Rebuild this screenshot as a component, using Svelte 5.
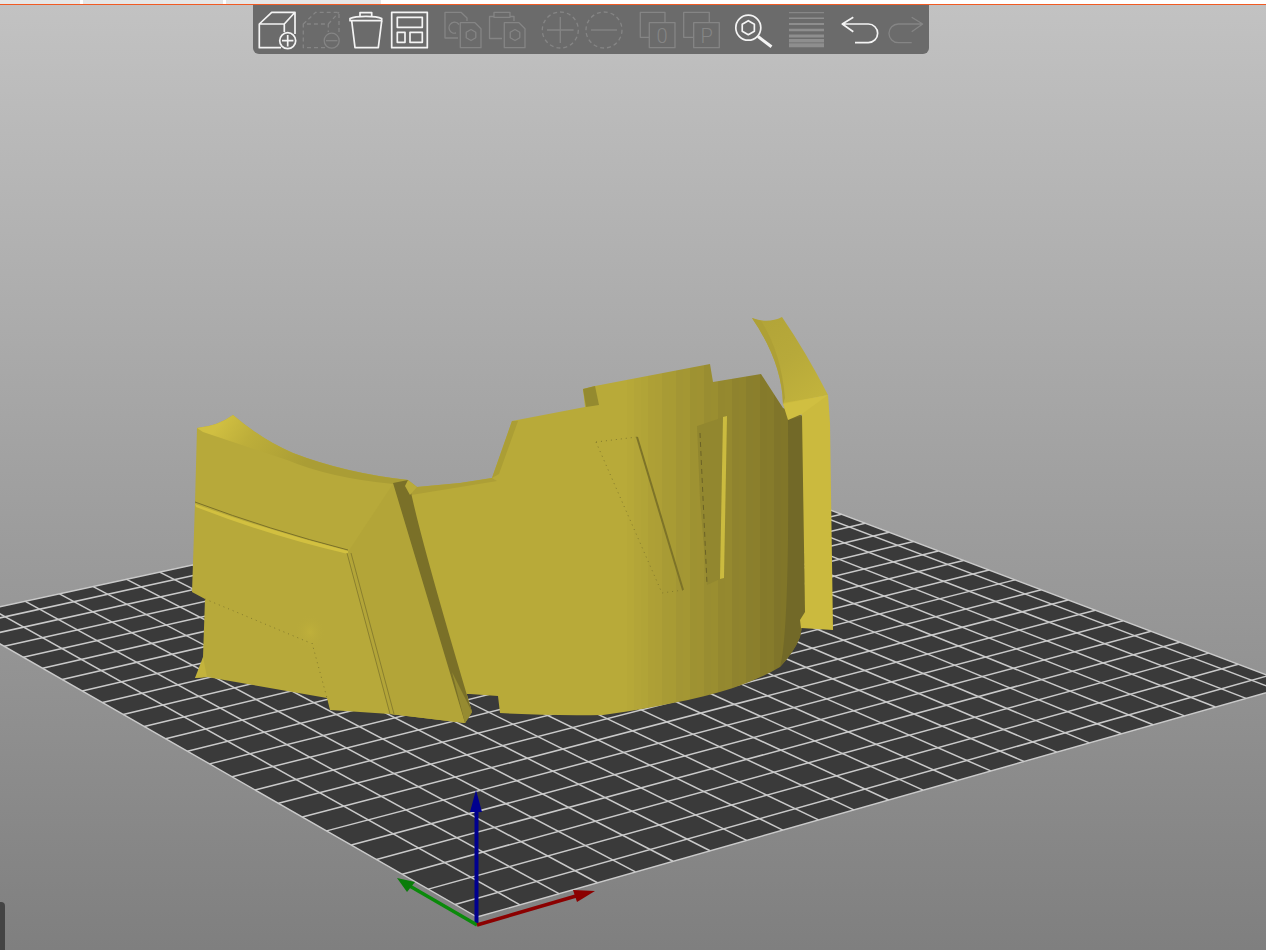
<script>
  // bed outline as seen on screen: front, right, back, left
  const bed = [[477, 917], [1293, 685], [690, 457], [-47, 617]];

  function makeProjection([[x0, y0], [x1, y1], [x2, y2], [x3, y3]]) {
    const sx = x0 - x1 + x2 - x3;
    const sy = y0 - y1 + y2 - y3;
    const dx1 = x1 - x2, dx2 = x3 - x2, dy1 = y1 - y2, dy2 = y3 - y2;
    const den = dx1 * dy2 - dx2 * dy1;
    const g = (sx * dy2 - dx2 * sy) / den;
    const h = (dx1 * sy - sx * dy1) / den;
    const a = x1 - x0 + g * x1, b = x3 - x0 + h * x3;
    const d = y1 - y0 + g * y1, e = y3 - y0 + h * y3;
    return (u, v) => {
      const w = g * u + h * v + 1;
      return [(a * u + b * v + x0) / w, (d * u + e * v + y0) / w];
    };
  }

  const project = makeProjection(bed);
  const gridLines = [];
  for (let u = 0.046; u < 1; u += 0.0423) gridLines.push([project(u, 0), project(u, 1)]);
  for (let v = 0.0343; v < 1; v += 0.0424) gridLines.push([project(0, v), project(1, v)]);

  // faceted shading of the round wall, dark towards the right
  const wallStart = 415;
  const wallEnd = 805;
  const wallStops = [{ x: wallStart, color: 'rgb(184,170,57)' }];
  for (let x = 620, i = 0; x < wallEnd; x += 7, i++) {
    const t = (x - 620) / (wallEnd - 620);
    const bump = (i % 2 ? 2 : -1) * Math.min(1, t * 3);
    const color = `rgb(${184 - 66 * t + bump},${170 - 62 * t + bump},${57 - 18 * t})`;
    wallStops.push({ x, color }, { x: x + 6.8, color });
  }

  const layerLines = [[4.7, 1], [10.3, 1.5], [16, 2], [22, 2.5], [28, 3], [32.7, 3.5], [37.3, 4]];
  const hex = (cx, cy, r) =>
    [0, 1, 2, 3, 4, 5]
      .map((i) => {
        const an = Math.PI / 6 + (i * Math.PI) / 3;
        return `${cx + r * Math.cos(an)},${cy + r * Math.sin(an)}`;
      })
      .join(' ');
</script>

<div class="app">
  <div class="tabs">
    <div class="tab first"></div>
    <div class="tab second"></div>
    <div class="tab third"></div>
  </div>
  <div class="accent"></div>

  <div class="viewport">
    <svg class="scene" viewBox="0 5 1266 945" aria-hidden="true">
      <defs>
        <linearGradient id="wall" gradientUnits="userSpaceOnUse" x1={wallStart} y1="0" x2={wallEnd} y2="0">
          {#each wallStops as stop}
            <stop offset={Math.min(1, (stop.x - wallStart) / (wallEnd - wallStart))} stop-color={stop.color} />
          {/each}
        </linearGradient>
        <linearGradient id="rim" gradientUnits="userSpaceOnUse" x1="225" y1="415" x2="300" y2="470">
          <stop offset="0" stop-color="#d0bf41" />
          <stop offset="0.35" stop-color="#bdae3a" />
          <stop offset="1" stop-color="#aa9d35" />
        </linearGradient>
        <linearGradient id="arm" gradientUnits="userSpaceOnUse" x1="755" y1="320" x2="815" y2="400">
          <stop offset="0" stop-color="#b2a438" />
          <stop offset="0.5" stop-color="#b7a93a" />
          <stop offset="1" stop-color="#c2b33c" />
        </linearGradient>
        <radialGradient id="dent" cx="0.5" cy="0.5" r="0.5">
          <stop offset="0" stop-color="#bfb03b" />
          <stop offset="1" stop-color="#b7a93a" stop-opacity="0" />
        </radialGradient>
      </defs>

      <!-- print bed -->
      <polygon class="plate" points={bed.join(' ')} />
      {#each gridLines as [from, to]}
        <line class="gridline" x1={from[0]} y1={from[1]} x2={to[0]} y2={to[1]} />
      {/each}
      <polygon class="plate-edge" points={bed.join(' ')} />

      <!-- curved arm behind the strip -->
      <path fill="url(#arm)" d="M752 318Q768 324 782 317Q806 352 828 395L783 404Q782 362 752 318Z" />
      <path fill="#aea036" d="M752 318Q757 320 761 321Q781 352 785 398L783 404Q782 362 752 318Z" />

      <!-- round wall, its left side runs on under the panel -->
      <path
        fill="url(#wall)"
        d="M400 482L417 487L460 483L492 478L512 421L585 407L583 389L595 386L710 364L713 382L761 374L783 408L803 416L805 612L800 637Q794 652 780 667Q760 679 733 688Q705 697 673 703Q640 710 603 715Q550 716 500 713L498 696L470 694L440 694Z"
      />
      <polygon fill="#948a2f" points="583,389 595,386 599,405 586,407" />
      <polygon fill="#ab9e35" points="512,421 518,421 499,474 492,478" />
      <polygon fill="#ad9f36" points="408,480 417,487 460,483 492,478 497,481 411,495" />
      <path fill="#726928" d="M788 420L803 416L805 612L800 637Q794 652 780 667Q790 630 788 420Z" />

      <!-- slots in the wall -->
      <polyline class="dots" points="596,442 637,437" />
      <polyline class="dots" points="596,442 662,593 683,590" />
      <line class="slot" x1="637" y1="437" x2="683" y2="590" />
      <polygon fill="#92872f" points="697,426 724,417 720,579 707,585 700,500" />
      <polyline class="dashes" points="700,433 707,584" />
      <polygon fill="#cbbb3f" points="723,417 727,416 724,578 720,579" />

      <!-- right strip -->
      <polygon fill="#cbba3e" points="783,403 828,395 830,423 833,630 801,628 800,620 805,612 802,415" />
      <polygon fill="#d0bf41" points="783,404 828,395 802,414 788,420" />

      <!-- left panel -->
      <path
        fill="#b7a93a"
        d="M197 428Q218 426 233 415Q262 440 293 453Q345 473 408 480L410 497L472 712L465 723L390 714L330 710L327 698L207 677L195 678Q203 668 203 657L205 599L192 592L195 503Z"
      />
      <path fill="url(#rim)" d="M197 428Q218 426 233 415Q262 440 293 453Q345 473 408 480L393 484Q330 478 287 460L203 432Z" />
      <polygon fill="#b3a538" points="393,484 348,552 390,714 465,723" />
      <ellipse fill="url(#dent)" cx="310" cy="632" rx="16" ry="18" />
      <polygon fill="#c3b33c" points="207,677 195,678 203,657" />

      <!-- groove across the panel -->
      <path class="groove-dark" d="M195 502Q270 530 348 550" />
      <path fill="#d2c040" d="M195 504Q270 531 348 551L348 554Q270 536 196 507Z" />
      <line class="seam" x1="347" y1="553" x2="390" y2="714" />
      <line class="seam" x1="351" y1="553" x2="394" y2="714" />
      <polyline class="dots" points="205,599 308,642" />
      <polyline class="dots" points="312,643 327,698" />

      <!-- dark strip down the middle -->
      <path fill="#7a7028" d="M393 483L408 480L412 497Q425 555 472 712L465 723Z" />
      <polygon fill="#968b31" points="452,672 472,712 465,723" />
      <polygon fill="#b9ab3a" points="408,480 417,487 410,495 405,486" />

      <!-- axes -->
      <line class="axis blue" x1="476.5" y1="925" x2="476.5" y2="810" />
      <polygon class="blue-head" points="476,790 470,812 482,812" />
      <line class="axis green" x1="477" y1="925" x2="408" y2="885" />
      <polygon class="green-head" points="397,878 415,882 407,892" />
      <line class="axis red" x1="477" y1="925" x2="576" y2="896" />
      <polygon class="red-head" points="595,891 573,890 577,902" />
    </svg>

    <div class="toolbar">
      <div class="btn">
        <svg viewBox="0 0 44 44">
          <g class="on">
            <path d="M25 39.7H3.3V16H28.3V24M3.3 16L15.7 4.3H39V26M28.3 16L39 4.3" />
            <circle cx="31.7" cy="32.7" r="8" />
            <path d="M26 32.7H37.4M31.7 27V38.4" />
          </g>
        </svg>
      </div>
      <div class="btn">
        <svg viewBox="0 0 44 44">
          <g class="off dashed">
            <path d="M25 39.7H3.3V16H28.3V24M3.3 16L15.7 4.3H39V26M28.3 16L39 4.3" />
          </g>
          <g class="off">
            <circle cx="31.7" cy="32.7" r="7.5" />
            <path d="M26 32.7H37.4" />
          </g>
        </svg>
      </div>
      <div class="btn">
        <svg viewBox="0 0 44 44">
          <g class="on">
            <path d="M7.7 13L11 39.7H34.3L37.7 13" />
            <path d="M6 12.7H37.7V10.4C32 7.6 12 7.6 6 10.4Z" />
            <path d="M16 8V4.6H27.7V8" />
          </g>
        </svg>
      </div>
      <div class="btn">
        <svg viewBox="0 0 44 44">
          <g class="on">
            <rect x="3.7" y="4.3" width="35.6" height="35.4" />
            <rect x="9.3" y="9.3" width="25" height="10" />
            <rect x="9.3" y="24.3" width="7.7" height="10" />
            <rect x="22" y="24.3" width="12.3" height="10" />
          </g>
        </svg>
      </div>

      <div class="btn group">
        <svg viewBox="0 0 44 44">
          <g class="off">
            <path d="M17 30H4V4.3H20L26 10V13" />
            <path d="M18 16.5A5.5 5.5 0 1 0 15 25" />
            <path d="M19.3 14.7H34L40 20.7V39.7H19.3Z" />
            <polygon points={hex(30, 27, 5.5)} />
          </g>
        </svg>
      </div>
      <div class="btn">
        <svg viewBox="0 0 44 44">
          <g class="off">
            <path d="M17 30.5H4.5V8.5H9M25 8.5H29V13" />
            <rect x="9" y="4.3" width="16" height="5" />
            <path d="M19.3 14.7H34L40 20.7V39.7H19.3Z" />
            <polygon points={hex(30, 27, 5.5)} />
          </g>
        </svg>
      </div>

      <div class="btn group">
        <svg viewBox="0 0 44 44">
          <g class="off">
            <circle class="dashed" cx="22.3" cy="22" r="18" />
            <path d="M9 22H35.6M22.3 9V35" />
          </g>
        </svg>
      </div>
      <div class="btn">
        <svg viewBox="0 0 44 44">
          <g class="off">
            <circle class="dashed" cx="22" cy="22" r="18" />
            <path d="M9 22H35" />
          </g>
        </svg>
      </div>

      <div class="btn group">
        <svg viewBox="0 0 44 44">
          <g class="off">
            <path d="M14.3 29.3H5.3V4.3H30V14.7" />
            <rect x="14.3" y="14.7" width="25.7" height="25" />
          </g>
          <text class="glyph" x="27" y="34.7">0</text>
        </svg>
      </div>
      <div class="btn">
        <svg viewBox="0 0 44 44">
          <g class="off">
            <path d="M14.7 29.3H4.7V4.3H30.3V14.7" />
            <rect x="14.7" y="14.7" width="25.6" height="25" />
          </g>
          <text class="glyph" x="27.7" y="34.7">P</text>
        </svg>
      </div>

      <div class="btn group">
        <svg viewBox="0 0 44 44">
          <g class="on">
            <circle cx="16.3" cy="19.7" r="12.5" />
            <polygon points={hex(16.3, 19.7, 7)} />
            <path class="thick" d="M26 28.5L39.5 38.7" />
          </g>
        </svg>
      </div>

      <div class="btn group">
        <svg viewBox="0 0 44 44">
          {#each layerLines as [y, width]}
            <line class="layer" x1="4" x2="39" y1={y} y2={y} stroke-width={width} />
          {/each}
        </svg>
      </div>

      <div class="btn group">
        <svg viewBox="0 0 44 44">
          <g class="on">
            <path d="M15.3 9.3L4.3 16L15.3 23.7M4.3 16H30.3A9.3 9.3 0 0 1 30.3 34.7H17" />
          </g>
        </svg>
      </div>
      <div class="btn">
        <svg viewBox="0 0 44 44">
          <g class="off">
            <path d="M29.7 9.3L40.7 16L29.7 23.7M40.7 16H16.3A9.3 9.3 0 0 0 16.3 34.7H29.7" />
          </g>
        </svg>
      </div>
    </div>

    <div class="side-handle"></div>
  </div>
</div>

<style>
  :global(body) {
    overflow: hidden;
  }

  .app {
    display: flex;
    flex-direction: column;
    height: 950px;
    background: #fff;
  }

  .tabs {
    display: flex;
    gap: 3px;
    height: 4px;
  }

  .tab {
    background: #e6e6e6;
  }

  .first {
    width: 80px;
  }

  .second {
    width: 140px;
  }

  .third {
    width: 155px;
  }

  .accent {
    height: 1px;
    background: #f15a22;
  }

  .viewport {
    position: relative;
    flex: 1;
    overflow: hidden;
    background: linear-gradient(#c2c2c2, #7f7f7f);
  }

  .scene {
    position: absolute;
    inset: 0;
    width: 100%;
    height: 100%;
  }

  .plate {
    fill: #3a3a3a;
  }

  .gridline {
    stroke: #cacaca;
    stroke-width: 1.5;
  }

  .plate-edge {
    fill: none;
    stroke: #cacaca;
    stroke-width: 1.4;
  }

  .dots {
    fill: none;
    stroke: #857b2c;
    stroke-width: 1;
    stroke-dasharray: 1 4;
  }

  .dashes {
    fill: none;
    stroke: #6b6226;
    stroke-width: 1;
    stroke-dasharray: 5 4;
  }

  .slot {
    stroke: #7d7328;
    stroke-width: 2;
  }

  .groove-dark {
    fill: none;
    stroke: #7b7128;
    stroke-width: 1;
  }

  .seam {
    stroke: #8a7f2e;
    stroke-width: 1;
  }

  .axis {
    fill: none;
  }

  .blue {
    stroke: #00008f;
    stroke-width: 4;
  }

  .green {
    stroke: #0a8a0a;
    stroke-width: 3.5;
  }

  .red {
    stroke: #8b0000;
    stroke-width: 3.5;
  }

  .blue-head {
    fill: #00008f;
  }

  .green-head {
    fill: #0a7d0a;
  }

  .red-head {
    fill: #8b0000;
  }

  .toolbar {
    position: absolute;
    top: 0;
    left: 253px;
    display: flex;
    padding: 3px 3px 2px;
    background: #6b6b6b;
    border-radius: 0 0 6px 6px;
  }

  .btn {
    width: 44px;
    height: 44px;
  }

  .btn svg {
    display: block;
    width: 44px;
    height: 44px;
    overflow: visible;
  }

  .group {
    margin-left: 9px;
  }

  .on,
  .off {
    fill: none;
    stroke-linejoin: round;
  }

  .on {
    stroke: #f4f4f4;
    stroke-width: 1.7;
  }

  .off {
    stroke: #858585;
    stroke-width: 1.3;
  }

  .dashed {
    stroke-dasharray: 4 3;
  }

  .thick {
    stroke-width: 3;
  }

  .glyph {
    fill: #858585;
    font-family: Roboto, "Liberation Sans", sans-serif;
    font-size: 20px;
    font-weight: 300;
    text-anchor: middle;
  }

  .layer {
    stroke: #8e8e8e;
  }

  .side-handle {
    position: absolute;
    left: 0;
    bottom: 0;
    width: 5px;
    height: 48px;
    background: #444;
    border-radius: 0 4px 0 0;
  }
</style>
